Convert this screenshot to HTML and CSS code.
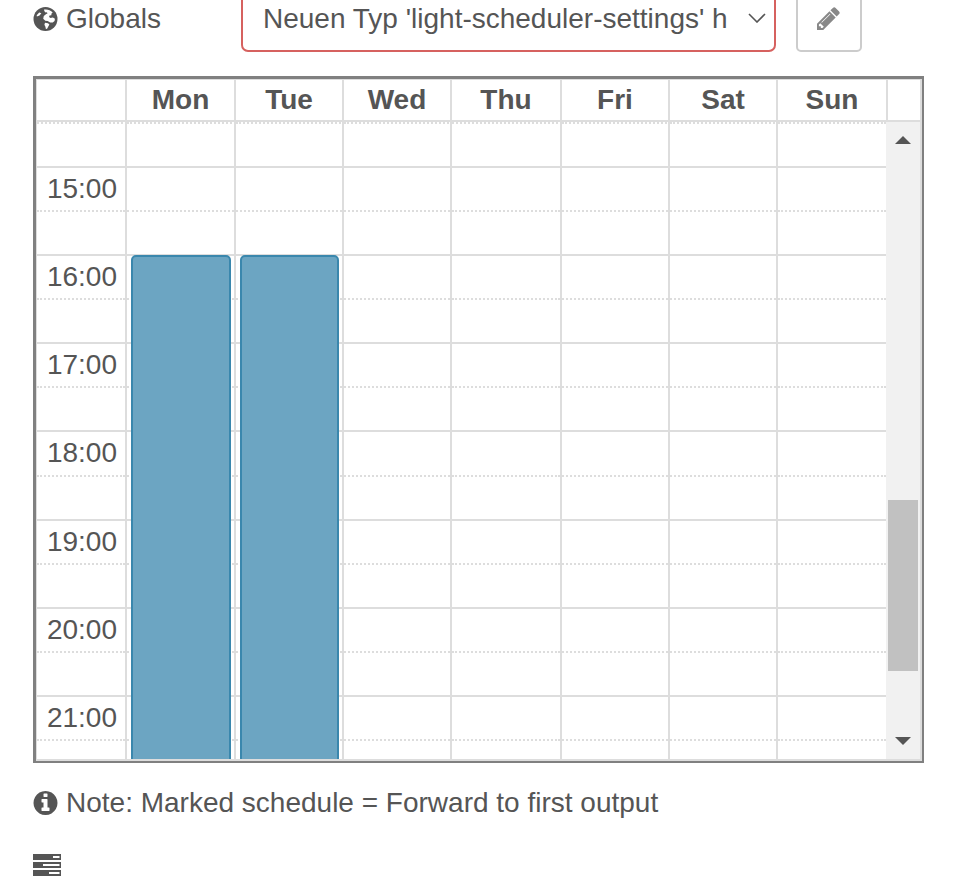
FILE: index.html
```html
<!DOCTYPE html>
<html lang="de">
<head>
<meta charset="utf-8">
<title>Light scheduler</title>
<link rel="stylesheet" href="styles.css">
</head>
<body>
<div class="top">
  <label class="top-label">
    <svg class="ic" viewBox="0 0 24 24"><circle cx="12" cy="12" r="12" fill="#555"/><path fill="#fff" d="M10.500 2.600c3.200-.7 6.500.5 8.700 2.800l-1.200 1-.2 1.800-1.800.2-.4 1.500 1.400 1.200 2.400-.6 2 1.300-.3 2.300-1.900 1.300-2.600.1-2.400-1.400-2.400-.3-2.100-2.100.6-2.700 2.400-1.900 1.300-.7-.6-1.200-1.300.3-1.200-1.200z"/><path fill="#fff" d="M11.500 15.800l3 .4 1.400 1.300-1 1.800-1.300 2.500-1.200.2-.5-2.300-1-2z"/><path fill="#fff" d="M3.200 8.200 5.700 5.500l2.200.7L6 8.600l-2.600 1z"/></svg>
    <span>Globals</span>
  </label>
  <div class="select">
    <span class="select-text">Neuen Typ 'light-scheduler-settings' h</span>
    <svg class="chev" viewBox="0 0 18 10"><path d="M1 1l8 8 8-8" fill="none" stroke="#555" stroke-width="1.6"/></svg>
  </div>
  <div class="edit">
    <svg class="pencil" viewBox="128 128 1536 1536"><path fill="#888" d="M491 1536l91-91-235-235-91 91v107h128v128h107zm523-928q0-22-22-22-10 0-17 7l-542 542q-7 7-7 17 0 22 22 22 10 0 17-7l542-542q7-7 7-17zm-54-192l416 416-832 832H128v-416l832-832zm683 96q0 53-37 90l-166 166-416-416 166-165q36-38 90-38 53 0 91 38l235 234q37 39 37 91z"/></svg>
  </div>
</div>

<div class="cal">
  <div class="head">
    <div class="hc"></div>
    <div class="hc">Mon</div>
    <div class="hc">Tue</div>
    <div class="hc">Wed</div>
    <div class="hc">Thu</div>
    <div class="hc">Fri</div>
    <div class="hc">Sat</div>
    <div class="hc">Sun</div>
    <div class="hc end"></div>
  </div>
  <div class="body">
    <div class="col">
      <div class="s"></div><div class="s">15:00</div><div class="s"></div><div class="s">16:00</div><div class="s"></div><div class="s">17:00</div><div class="s"></div><div class="s">18:00</div><div class="s"></div><div class="s">19:00</div><div class="s"></div><div class="s">20:00</div><div class="s"></div><div class="s">21:00</div><div class="s"></div>
    </div>
    <div class="col">
      <div class="s"></div><div class="s"></div><div class="s"></div><div class="s"></div><div class="s"></div><div class="s"></div><div class="s"></div><div class="s"></div><div class="s"></div><div class="s"></div><div class="s"></div><div class="s"></div><div class="s"></div><div class="s"></div><div class="s"></div>
      <div class="event ev-mon"></div>
    </div>
    <div class="col">
      <div class="s"></div><div class="s"></div><div class="s"></div><div class="s"></div><div class="s"></div><div class="s"></div><div class="s"></div><div class="s"></div><div class="s"></div><div class="s"></div><div class="s"></div><div class="s"></div><div class="s"></div><div class="s"></div><div class="s"></div>
      <div class="event ev-tue"></div>
    </div>
    <div class="col">
      <div class="s"></div><div class="s"></div><div class="s"></div><div class="s"></div><div class="s"></div><div class="s"></div><div class="s"></div><div class="s"></div><div class="s"></div><div class="s"></div><div class="s"></div><div class="s"></div><div class="s"></div><div class="s"></div><div class="s"></div>
    </div>
    <div class="col">
      <div class="s"></div><div class="s"></div><div class="s"></div><div class="s"></div><div class="s"></div><div class="s"></div><div class="s"></div><div class="s"></div><div class="s"></div><div class="s"></div><div class="s"></div><div class="s"></div><div class="s"></div><div class="s"></div><div class="s"></div>
    </div>
    <div class="col">
      <div class="s"></div><div class="s"></div><div class="s"></div><div class="s"></div><div class="s"></div><div class="s"></div><div class="s"></div><div class="s"></div><div class="s"></div><div class="s"></div><div class="s"></div><div class="s"></div><div class="s"></div><div class="s"></div><div class="s"></div>
    </div>
    <div class="col">
      <div class="s"></div><div class="s"></div><div class="s"></div><div class="s"></div><div class="s"></div><div class="s"></div><div class="s"></div><div class="s"></div><div class="s"></div><div class="s"></div><div class="s"></div><div class="s"></div><div class="s"></div><div class="s"></div><div class="s"></div>
    </div>
    <div class="col last">
      <div class="s"></div><div class="s"></div><div class="s"></div><div class="s"></div><div class="s"></div><div class="s"></div><div class="s"></div><div class="s"></div><div class="s"></div><div class="s"></div><div class="s"></div><div class="s"></div><div class="s"></div><div class="s"></div><div class="s"></div>
    </div>
    <div class="bar">
      <svg class="arrow" viewBox="0 0 16 8"><path fill="#555" d="M8 0l8 8H0z"/></svg>
      <div class="thumb"></div>
      <svg class="arrow" viewBox="0 0 16 8"><path fill="#555" d="M0 0h16L8 8z"/></svg>
    </div>
  </div>
</div>

<div class="note">
  <svg class="ic" viewBox="128 128 1536 1536"><path fill="#555" d="M1152 1376v-160q0-14-9-23t-23-9h-96v-512q0-14-9-23t-23-9h-320q-14 0-23 9t-9 23v160q0 14 9 23t23 9h96v320h-96q-14 0-23 9t-9 23v160q0 14 9 23t23 9h448q14 0 23-9t9-23zm-128-896v-160q0-14-9-23t-23-9h-192q-14 0-23 9t-9 23v160q0 14 9 23t23 9h192q14 0 23-9t9-23zm640 416q0 209-103 385.5t-279.5 279.5-385.5 103-385.5-103-279.5-279.5-103-385.5 103-385.5 279.5-279.5 385.5-103 385.5 103 279.5 279.5 103 385.5z"/></svg>
  <span>Note: Marked schedule = Forward to first output</span>
</div>

<svg class="tasks" viewBox="0 0 28 22"><path fill="#555" fill-rule="evenodd" d="M0 0h28v6H0zM20 2v2h6.500V2zM0 8h28v6H0zM10 10v2h16.500v-2zM0 16h28v6H0zM16 18v2h10.500v-2z"/></svg>
</body>
</html>
```
FILE: styles.css
```css
* { box-sizing: border-box; }
html, body { margin: 0; padding: 0; background: #fff; }
body {
  height: 894px;
  overflow: hidden;
  font-family: "Liberation Sans", Arial, sans-serif;
  font-size: 28px;
  color: #555;
}
.top {
  display: flex;
  align-items: flex-end;
  height: 52px;
  margin-bottom: 24px;
  padding-left: 33px;
}
.top-label {
  display: flex;
  align-items: center;
  gap: 8px;
  width: 208px;
  height: 38px;
  margin-bottom: 14px;
}
.ic { width: 25px; height: 24px; flex: none; }
.select {
  display: flex;
  align-items: center;
  justify-content: space-between;
  width: 535px;
  height: 70px;
  padding: 18px 8px 0 20px;
  border: 2px solid #d6615f;
  border-radius: 7px;
}
.select-text { white-space: nowrap; overflow: hidden; width: 464px; margin-bottom: 14px; }
.chev { width: 18px; height: 10px; margin-bottom: 16px; }
.edit {
  display: flex;
  justify-content: center;
  width: 66px;
  height: 70px;
  margin-left: 20px;
  padding: 23px 2px 0 0;
  border: 2px solid #ccc;
  border-radius: 5px;
}
.pencil { width: 23px; height: 23px; }

.cal {
  width: 891px;
  height: 687px;
  margin-left: 33px;
  border-style: solid;
  border-color: #808080;
  border-width: 3px 2px 2px 3px;
  background: #ddd;
  padding: 1px 2px 2px 1px;
  display: flex;
  flex-direction: column;
}
.head {
  display: grid;
  grid-template-columns: 90px 109px 108px 108px 110px 108px 108px 110px 32px;
  height: 42px;
  flex: none;
  border-bottom: 2px solid #ddd;
  background: #fff;
}
.hc {
  border-right: 2px solid #ddd;
  text-align: center;
  font-weight: 700;
  line-height: 40px;
}
.hc.end { border-right: 0; }
.body {
  display: grid;
  grid-template-columns: 90px 109px 108px 108px 110px 108px 108px 108px 34px;
  flex: 1;
  min-height: 0;
  overflow: hidden;
  background: #fff;
}
.col {
  position: relative;
  border-right: 2px solid #ddd;
  border-top: 2px dotted #ddd;
  min-width: 0;
}
.col.last { border-right: 0; }
.s {
  height: 44.07px;
  border-bottom: 2px solid #ddd;
  padding-right: 8px;
  text-align: right;
  line-height: 41px;
}
.s:nth-child(even) { border-bottom: 2px dotted #ddd; }
.event {
  position: absolute;
  top: 131px;
  height: 700px;
  background: #6ca5c2;
  border: 2px solid #3a87ad;
  border-radius: 5px;
}
.ev-mon { left: 4px; width: 100px; }
.ev-tue { left: 4px; width: 99px; }
.bar {
  display: flex;
  flex-direction: column;
  align-items: center;
  background: #f1f1f1;
  padding: 14px 2px 0;
}
.arrow { width: 16px; height: 8px; flex: none; }
.thumb {
  width: 30px;
  height: 171px;
  margin: 356px 0 66px;
  background: #c1c1c1;
  flex: none;
}
.note {
  display: flex;
  align-items: center;
  gap: 8px;
  margin: 25px 0 0 33px;
  height: 30px;
}
.tasks {
  display: block;
  width: 28px;
  height: 22px;
  margin: 36px 0 0 33px;
}
```
